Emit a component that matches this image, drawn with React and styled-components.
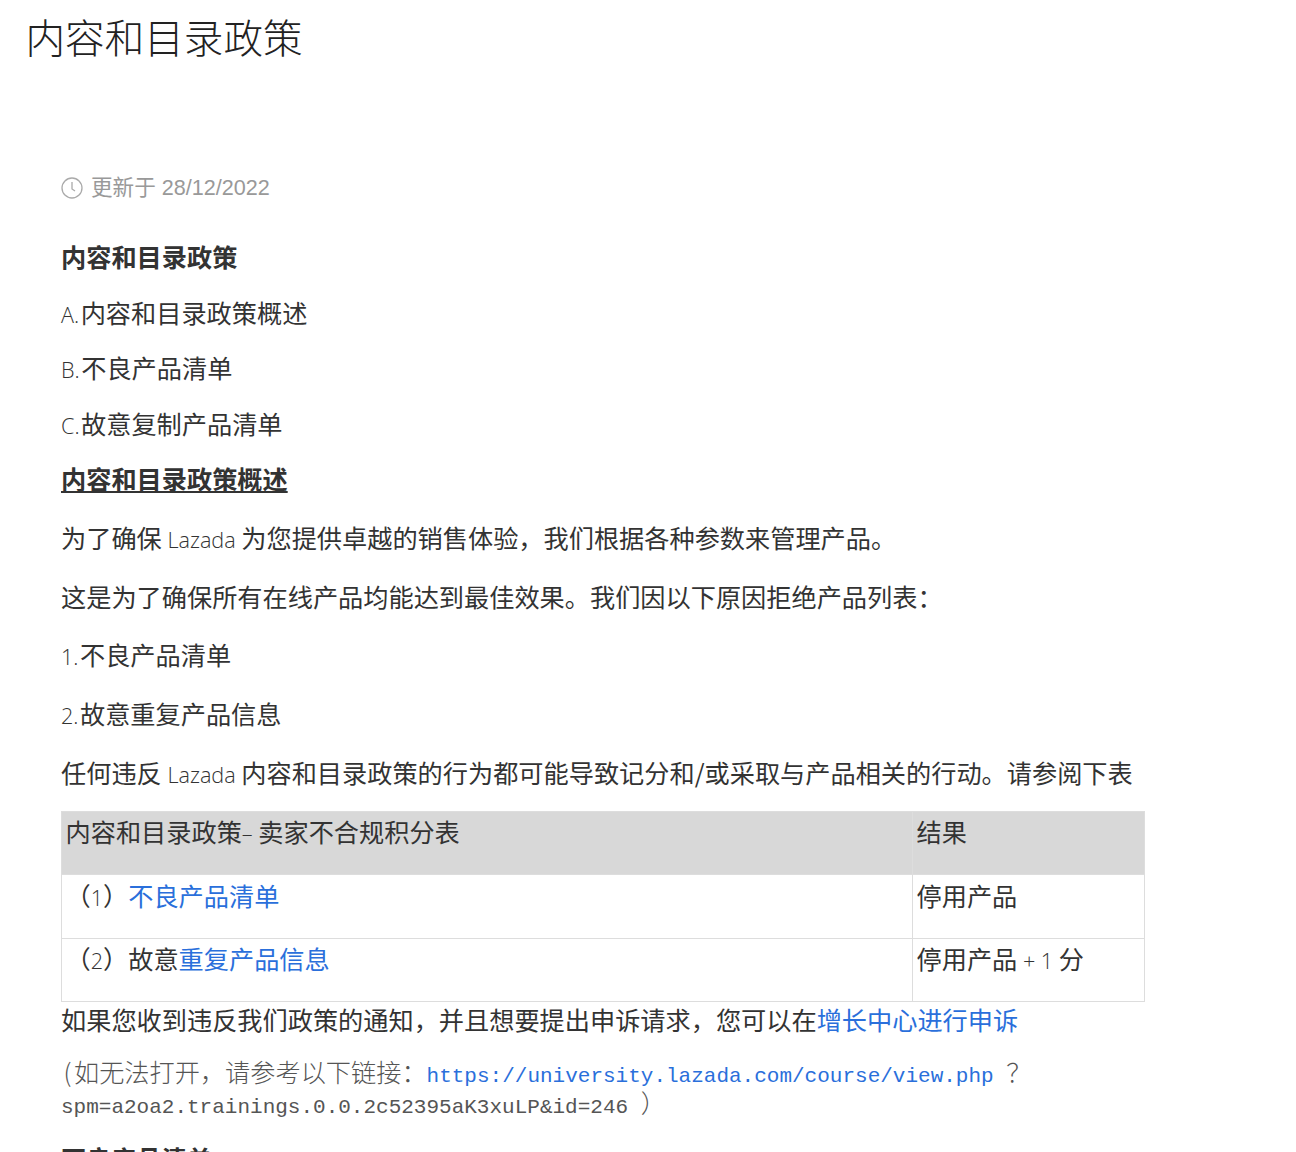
import styled, { createGlobalStyle } from 'styled-components'

const Global = createGlobalStyle`
html,body{margin:0;padding:0;background:#fff;overflow:hidden;height:1152px;}
`
const Page = styled.div`
height:1152px;overflow:hidden;font-family:"Noto Sans CJK SC",sans-serif;color:#333;
`
const Title = styled.h1`
margin:0;padding:10px 0 0 25.5px;font-size:39.6px;line-height:52px;font-weight:300;color:#222;
`
const Body = styled.div`
padding:110px 0 0 61px;width:1084px;
`
const Updated = styled.div`
display:flex;align-items:center;gap:8px;font-size:21.6px;line-height:32px;color:#999;font-family:"Liberation Sans","Noto Sans CJK SC",sans-serif;
`
const Para = styled.p`
margin:${p => p.$mt ?? 0}px 0 0;font-size:25.2px;line-height:34px;font-weight:${p => p.$bold ? 700 : 400};
text-decoration:${p => p.$under ? 'underline' : 'none'};color:#333;white-space:nowrap;
`
const Lat = styled.span`
font-family:"Open Sans",sans-serif;font-size:21.6px;font-weight:300;line-height:0;
margin-right:${p => p.$prefix ? 1.5 : 0}px;
`
const A = styled.a`color:#2a6fdb;text-decoration:none;`
const Table = styled.table`
border-collapse:collapse;width:1084px;margin-top:22.4px;table-layout:fixed;
`
const Cell = styled.td`
border:1px solid #ddd;padding:${p => p.$head ? '2px 4px 6px 3.5px' : '2.5px 4px 5.5px 3.5px'};height:54.4px;vertical-align:top;font-size:25.2px;line-height:34px;font-weight:400;color:#333;
background:${p => p.$head ? '#d8d8d8' : '#fff'};
`
const Mono = styled.p`
margin:${p => p.$mt ?? 0}px 0 0;font-family:"Liberation Mono",monospace;font-size:21px;line-height:31px;color:#555;width:1000px;
`
const Cjk = styled.span`
font-family:"Noto Sans CJK SC",sans-serif;font-size:25.2px;font-weight:300;line-height:0;
`
const Paren = styled.span`
margin:0 2.5px;
`

function ClockIcon() {
  return (
    <svg width="22" height="22" viewBox="0 0 22 22" fill="none" stroke="#aaa" strokeWidth="1.3">
      <circle cx="11" cy="11" r="10" />
      <path d="M11 5v7l3 2" />
    </svg>
  )
}

export default function App() {
  return (
    <Page>
      <Global />
      <Title>内容和目录政策</Title>
      <Body>
        <Updated>
          <ClockIcon />
          更新于 28/12/2022
        </Updated>
        <Para $bold $mt={35}>内容和目录政策</Para>
        <Para $mt={22}><Lat $prefix>A.</Lat>内容和目录政策概述</Para>
        <Para $mt={21}><Lat $prefix>B.</Lat>不良产品清单</Para>
        <Para $mt={21.5}><Lat $prefix>C.</Lat>故意复制产品清单</Para>
        <Para $bold $under $mt={21.5}>内容和目录政策概述</Para>
        <Para $mt={24.75}>为了确保 <Lat>Lazada</Lat> 为您提供卓越的销售体验，我们根据各种参数来管理产品。</Para>
        <Para $mt={24.75}>这是为了确保所有在线产品均能达到最佳效果。我们因以下原因拒绝产品列表：</Para>
        <Para $mt={24.75}><Lat $prefix>1.</Lat>不良产品清单</Para>
        <Para $mt={24.75}><Lat $prefix>2.</Lat>故意重复产品信息</Para>
        <Para $mt={24.5}>任何违反 <Lat>Lazada</Lat> 内容和目录政策的行为都可能导致记分和/或采取与产品相关的行动。请参阅下表</Para>
        <Table>
          <colgroup><col style={{ width: 851 }} /><col /></colgroup>
          <tbody>
            <tr><Cell $head>内容和目录政策<Lat>–</Lat> 卖家不合规积分表</Cell><Cell $head>结果</Cell></tr>
            <tr><Cell>（<Lat>1</Lat>）<A>不良产品清单</A></Cell><Cell>停用产品</Cell></tr>
            <tr><Cell>（<Lat>2</Lat>）故意<A>重复产品信息</A></Cell><Cell>停用产品 <Lat>+ 1</Lat> 分</Cell></tr>
          </tbody>
        </Table>
        <Para $mt={0}>如果您收到违反我们政策的通知，并且想要提出申诉请求，您可以在<A>增长中心进行申诉</A></Para>
        <Mono $mt={25}><Cjk><Paren>(</Paren>如无法打开，请参考以下链接：</Cjk><A>https://university.lazada.com/course/view.php</A> <Cjk>？</Cjk>spm=a2oa2.trainings.0.0.2c52395aK3xuLP&amp;id=246 <Cjk>）</Cjk></Mono>
        <Para $bold $mt={18}>不良产品清单</Para>
      </Body>
    </Page>
  )
}
